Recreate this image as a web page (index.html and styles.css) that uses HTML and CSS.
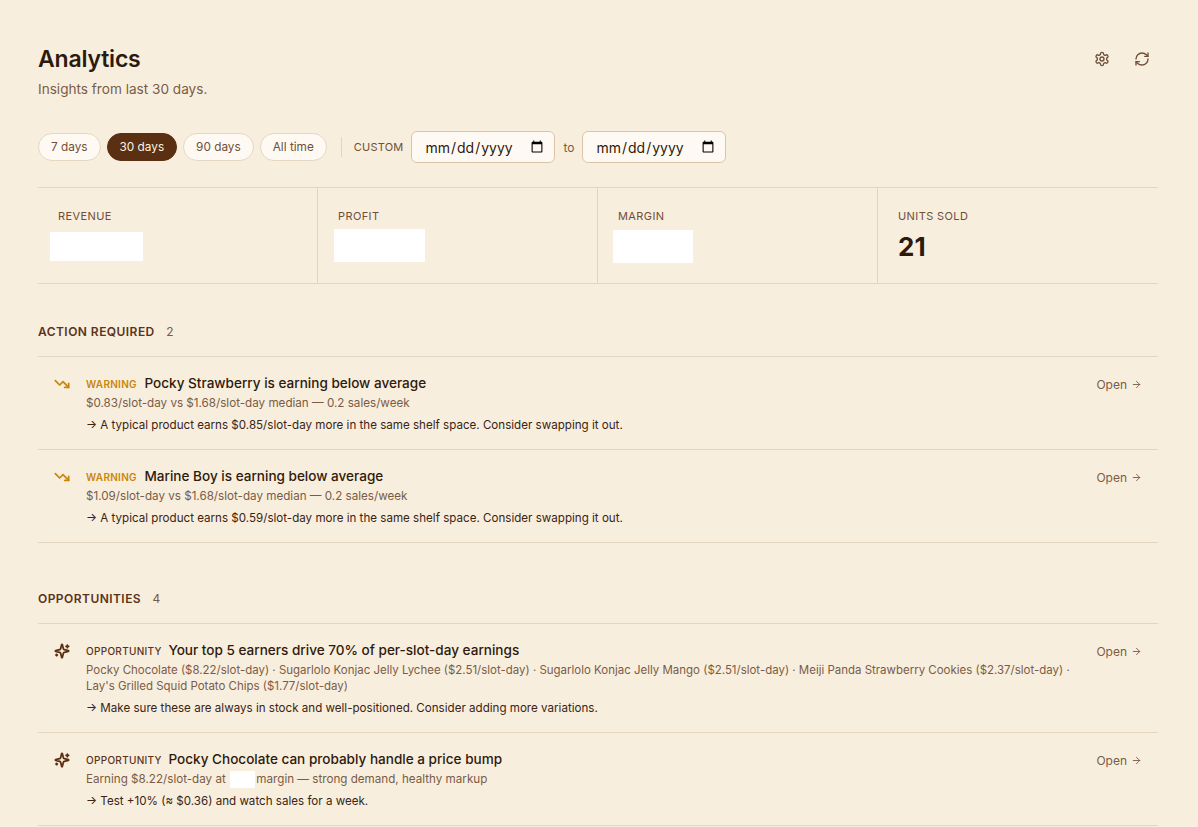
FILE: index.html
```html
<!DOCTYPE html>
<html lang="en">
<head>
    <meta charset="UTF-8">
    <meta name="viewport" content="width=device-width, initial-scale=1.0">
    <title>Analytics</title>
    <link rel="stylesheet" href="styles.css">
</head>
<body>
    <svg class="sprites" aria-hidden="true">
        <symbol id="i-settings" viewBox="0 0 24 24"><path d="M12.22 2h-.44a2 2 0 0 0-2 2v.18a2 2 0 0 1-1 1.73l-.43.25a2 2 0 0 1-2 0l-.15-.08a2 2 0 0 0-2.73.73l-.22.38a2 2 0 0 0 .73 2.73l.15.1a2 2 0 0 1 1 1.72v.51a2 2 0 0 1-1 1.74l-.15.09a2 2 0 0 0-.73 2.73l.22.38a2 2 0 0 0 2.73.73l.15-.08a2 2 0 0 1 2 0l.43.25a2 2 0 0 1 1 1.73V20a2 2 0 0 0 2 2h.44a2 2 0 0 0 2-2v-.18a2 2 0 0 1 1-1.73l.43-.25a2 2 0 0 1 2 0l.15.08a2 2 0 0 0 2.73-.73l.22-.39a2 2 0 0 0-.73-2.73l-.15-.08a2 2 0 0 1-1-1.74v-.5a2 2 0 0 1 1-1.74l.15-.09a2 2 0 0 0 .73-2.73l-.22-.38a2 2 0 0 0-2.73-.73l-.15.08a2 2 0 0 1-2 0l-.43-.25a2 2 0 0 1-1-1.73V4a2 2 0 0 0-2-2z"/><circle cx="12" cy="12" r="3"/></symbol>
        <symbol id="i-refresh" viewBox="0 0 24 24"><path d="M3 12a9 9 0 0 1 9-9 9.75 9.75 0 0 1 6.74 2.74L21 8"/><path d="M21 3v5h-5"/><path d="M21 12a9 9 0 0 1-9 9 9.75 9.75 0 0 1-6.74-2.74L3 16"/><path d="M8 16H3v5"/></symbol>
        <symbol id="i-trend" viewBox="0 0 24 24"><path d="M16 17h6v-6"/><path d="m22 17-8.5-8.5-5 5L2 7"/></symbol>
        <symbol id="i-sparkles" viewBox="0 0 24 24"><path d="M9.937 15.5A2 2 0 0 0 8.5 14.063l-6.135-1.582a.5.5 0 0 1 0-.962L8.5 9.936A2 2 0 0 0 9.937 8.5l1.582-6.135a.5.5 0 0 1 .963 0L14.063 8.5A2 2 0 0 0 15.5 9.937l6.135 1.581a.5.5 0 0 1 0 .964L15.5 14.063a2 2 0 0 0-1.437 1.437l-1.582 6.135a.5.5 0 0 1-.963 0z"/><path d="M20 3v4"/><path d="M22 5h-4"/><path d="M4 17v2"/><path d="M5 18H3"/></symbol>
        <symbol id="i-arrow" viewBox="0 0 24 24"><path d="M5 12h14"/><path d="m12 5 7 7-7 7"/></symbol>
    </svg>

    <main class="page">
        <header class="page-head">
            <div>
                <h1>Analytics</h1>
                <p class="subtitle">Insights from last 30 days.</p>
            </div>
            <div class="head-actions">
                <button class="icon-btn"><svg class="icon"><use href="#i-settings"/></svg></button>
                <button class="icon-btn"><svg class="icon"><use href="#i-refresh"/></svg></button>
            </div>
        </header>

        <div class="filters">
            <button class="pill">7 days</button>
            <button class="pill active">30 days</button>
            <button class="pill">90 days</button>
            <button class="pill">All time</button>
            <span class="divider"></span>
            <span class="custom-label">CUSTOM</span>
            <input type="date" class="date-input">
            <span class="to">to</span>
            <input type="date" class="date-input">
        </div>

        <section class="stats">
            <div class="stat">
                <div class="stat-label">REVENUE</div>
                <div class="redact redact-revenue"></div>
            </div>
            <div class="stat">
                <div class="stat-label">PROFIT</div>
                <div class="redact redact-profit"></div>
            </div>
            <div class="stat">
                <div class="stat-label">MARGIN</div>
                <div class="redact redact-margin"></div>
            </div>
            <div class="stat">
                <div class="stat-label">UNITS SOLD</div>
                <div class="stat-value">21</div>
            </div>
        </section>

        <section class="group">
            <h2 class="group-title">ACTION REQUIRED <span class="count">2</span></h2>
            <div class="row">
                <svg class="row-icon warn"><use href="#i-trend"/></svg>
                <div class="row-body">
                    <div class="row-title"><span class="tag warn">WARNING</span> Pocky Strawberry is earning below average</div>
                    <p class="row-detail">$0.83/slot-day vs $1.68/slot-day median — 0.2 sales/week</p>
                    <p class="row-hint">→ A typical product earns $0.85/slot-day more in the same shelf space. Consider swapping it out.</p>
                </div>
                <a class="open">Open <svg class="arrow"><use href="#i-arrow"/></svg></a>
            </div>
            <div class="row">
                <svg class="row-icon warn"><use href="#i-trend"/></svg>
                <div class="row-body">
                    <div class="row-title"><span class="tag warn">WARNING</span> Marine Boy is earning below average</div>
                    <p class="row-detail">$1.09/slot-day vs $1.68/slot-day median — 0.2 sales/week</p>
                    <p class="row-hint">→ A typical product earns $0.59/slot-day more in the same shelf space. Consider swapping it out.</p>
                </div>
                <a class="open">Open <svg class="arrow"><use href="#i-arrow"/></svg></a>
            </div>
        </section>

        <section class="group">
            <h2 class="group-title">OPPORTUNITIES <span class="count">4</span></h2>
            <div class="row">
                <svg class="row-icon"><use href="#i-sparkles"/></svg>
                <div class="row-body">
                    <div class="row-title"><span class="tag">OPPORTUNITY</span> Your top 5 earners drive 70% of per-slot-day earnings</div>
                    <p class="row-detail long">Pocky Chocolate ($8.22/slot-day) · Sugarlolo Konjac Jelly Lychee ($2.51/slot-day) · Sugarlolo Konjac Jelly Mango ($2.51/slot-day) · Meiji Panda Strawberry Cookies ($2.37/slot-day) · Lay's Grilled Squid Potato Chips ($1.77/slot-day)</p>
                    <p class="row-hint">→ Make sure these are always in stock and well-positioned. Consider adding more variations.</p>
                </div>
                <a class="open">Open <svg class="arrow"><use href="#i-arrow"/></svg></a>
            </div>
            <div class="row">
                <svg class="row-icon"><use href="#i-sparkles"/></svg>
                <div class="row-body">
                    <div class="row-title"><span class="tag">OPPORTUNITY</span> Pocky Chocolate can probably handle a price bump</div>
                    <p class="row-detail">Earning $8.22/slot-day at <span class="redact-inline"></span> margin — strong demand, healthy markup</p>
                    <p class="row-hint">→ Test +10% (≈ $0.36) and watch sales for a week.</p>
                </div>
                <a class="open">Open <svg class="arrow"><use href="#i-arrow"/></svg></a>
            </div>
        </section>
    </main>
</body>
</html>
```

FILE: styles.css
```css
* {
    box-sizing: border-box;
}

html, body {
    height: 827px;
    overflow: hidden;
}

body {
    margin: 0;
    background: #f8eede;
    color: #2e1a0c;
    font-family: 'Inter', sans-serif;
}

.sprites {
    display: none;
}

.page {
    padding: 40px 40px 0 38px;
}

.page-head {
    display: flex;
    justify-content: space-between;
    align-items: flex-start;
}

h1 {
    margin: 0;
    font-size: 23px;
    line-height: 38px;
    font-weight: 600;
    letter-spacing: -0.2px;
}

.subtitle {
    margin: 2px 0 0;
    font-size: 13.6px;
    line-height: 18px;
    color: #7a5c46;
}

.head-actions {
    display: flex;
    gap: 8px;
    padding: 8px 0 0;
}

.icon-btn {
    width: 32px;
    height: 22px;
    padding: 0;
    border: none;
    background: none;
    color: #6f4f38;
    display: flex;
    align-items: center;
    justify-content: center;
}

.icon {
    width: 16px;
    height: 16px;
    fill: none;
    stroke: currentColor;
    stroke-width: 2;
    stroke-linecap: round;
    stroke-linejoin: round;
}

.filters {
    display: flex;
    align-items: center;
    margin-top: 32px;
    height: 34px;
}

.pill {
    height: 28px;
    padding: 0 12px;
    margin-right: 6px;
    border: 1px solid #e6d7c2;
    border-radius: 14px;
    background: #fefaf3;
    color: #6f4f38;
    font-family: inherit;
    font-size: 11.8px;
}

.pill.active {
    background: #5a2f12;
    border-color: #5a2f12;
    color: #fbf3e6;
}

.divider {
    width: 1px;
    height: 20px;
    background: #e4d5c0;
    margin: 0 12px 0 8px;
}

.custom-label {
    font-size: 11px;
    letter-spacing: 0.2px;
    color: #6f4f38;
    margin-right: 8px;
}

.to {
    font-size: 12px;
    color: #7a5c46;
    margin: 0 8px;
}

.date-input {
    width: 144px;
    height: 32px;
    padding: 0 8px 0 12px;
    border: 1px solid #dcc4a6;
    border-radius: 6px;
    background: #fefaf3;
    color: #2e1a0c;
    font-family: inherit;
    font-size: 14px;
}

.stats {
    display: flex;
    margin-top: 23px;
    height: 97px;
    border-top: 1px solid #e4d5c0;
    border-bottom: 1px solid #e4d5c0;
}

.stat {
    width: 280px;
    padding: 21px 20px 0;
    border-right: 1px solid #e4d5c0;
}

.stat:last-child {
    border-right: none;
}

.stat-label {
    font-size: 11px;
    line-height: 14px;
    letter-spacing: 0.4px;
    color: #6f4f38;
}

.stat-value {
    margin-top: 8px;
    font-size: 26px;
    line-height: 32px;
    font-weight: 700;
}

.redact {
    background: #fff;
}

.redact-revenue {
    width: 93px;
    height: 29px;
    margin: 9px 0 0 -8px;
}

.redact-profit {
    width: 91px;
    height: 33px;
    margin: 6px 0 0 -4px;
}

.redact-margin {
    width: 80px;
    height: 33px;
    margin: 7px 0 0 -5px;
}

.group {
    margin-top: 39px;
}

.group + .group {
    margin-top: 47px;
}

.group-title {
    margin: 0;
    padding-bottom: 15px;
    font-size: 12px;
    line-height: 18px;
    font-weight: 600;
    letter-spacing: 0.45px;
    color: #5a3419;
    border-bottom: 1px solid #e4d5c0;
}

.count {
    margin-left: 8px;
    font-weight: 400;
    color: #7a5c46;
}

.row {
    display: flex;
    padding: 16px;
    border-bottom: 1px solid #e4d5c0;
}

.row-icon {
    flex: none;
    width: 16px;
    height: 16px;
    margin: 3px 16px 0 0;
    fill: none;
    stroke: #5a2f12;
    stroke-width: 2.6;
    stroke-linecap: round;
    stroke-linejoin: round;
}

.row-icon.warn {
    stroke: #c8860a;
}

.row-body {
    flex: 1;
    padding-right: 24px;
}

.row-title {
    font-size: 13.55px;
    line-height: 20px;
    font-weight: 500;
}

.tag {
    margin-right: 3px;
    font-size: 10px;
    font-weight: 500;
    letter-spacing: 0.3px;
    color: #5a3419;
}

.tag.warn {
    margin-right: 4px;
    font-weight: 600;
    color: #c8860a;
}

.row-detail {
    margin: 1px 0 0;
    font-size: 11.65px;
    line-height: 16px;
    color: #7a5c46;
}

.row-detail.long {
    font-size: 11.47px;
}

.row-hint {
    margin: 6px 0 0;
    font-size: 11.6px;
    line-height: 16px;
    color: #3a2413;
}

.redact-inline {
    display: inline-block;
    width: 25px;
    height: 17px;
    margin: -2px -2px -2px 1px;
    vertical-align: middle;
    background: #fff;
}

.open {
    flex: none;
    display: flex;
    align-items: center;
    gap: 4px;
    height: 18px;
    margin-top: 2px;
    font-size: 12px;
    color: #7a5c46;
}

.arrow {
    width: 11px;
    height: 11px;
    fill: none;
    stroke: currentColor;
    stroke-width: 2;
    stroke-linecap: round;
    stroke-linejoin: round;
}
```
